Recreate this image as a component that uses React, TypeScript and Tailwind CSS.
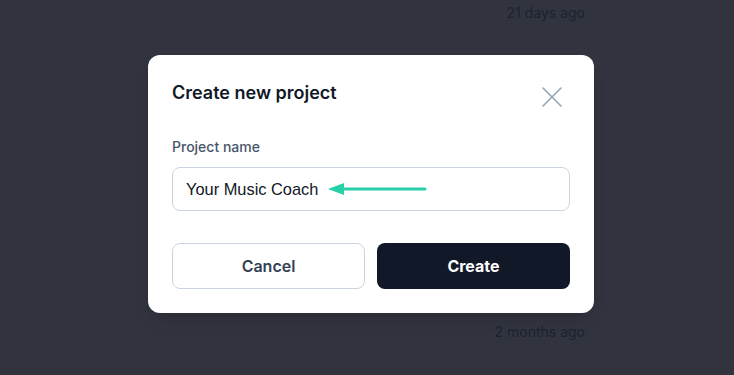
import React from "react";

export default function App() {
  return (
    <div
      className="relative w-[734px] h-[375px] bg-[#31343e] overflow-hidden"
      style={{ fontFamily: "Inter, 'Noto Sans', sans-serif" }}
    >
      <div className="absolute right-[149px] top-[3px] text-[14px] leading-[20px] text-[#1e2130]">21 days ago</div>
      <div className="absolute right-[149px] top-[322px] text-[14px] leading-[20px] text-[#1e2130]">2 months ago</div>
      <div className="absolute left-[148px] top-[55px] w-[446px] rounded-[12px] bg-white px-6 pt-6 pb-6 shadow-lg">
        <div className="flex h-[28px] items-start justify-between">
          <h2 className="text-[18px] leading-[28px] font-semibold text-[#111827]">Create new project</h2>
          <svg className="mt-[6px] mr-[6px] shrink-0" width="24" height="24" viewBox="0 0 24 24" fill="none" stroke="#94a3b8" strokeWidth="1.6" strokeLinecap="round">
            <path d="M3 3L21 21M21 3L3 21" />
          </svg>
        </div>
        <label className="mt-[30px] block text-[14px] leading-[20px] font-medium text-[#475569]">Project name</label>
        <div className="relative mt-[10px] flex h-[44px] items-center rounded-lg border border-[#cbd5e1] px-[13px]">
          <span className="text-[16.4px] text-[#111827]" style={{ fontFamily: "'Liberation Sans', Arial, sans-serif" }}>
            Your Music Coach
          </span>
          <svg className="absolute left-[155px] top-[13px]" width="100" height="16" viewBox="0 0 100 16">
            <path d="M12 8H97" stroke="#26d0a9" strokeWidth="3" strokeLinecap="round" />
            <path d="M0 8L16 2L16 14Z" fill="#26d0a9" />
          </svg>
        </div>
        <div className="mt-[32px] grid grid-cols-2 gap-3">
          <button className="h-[46px] rounded-lg border border-[#cbd5e1] bg-white text-[16px] font-semibold text-[#334155]">
            Cancel
          </button>
          <button className="h-[46px] rounded-lg bg-[#111827] text-[16px] font-bold text-white">Create</button>
        </div>
      </div>
    </div>
  );
}
